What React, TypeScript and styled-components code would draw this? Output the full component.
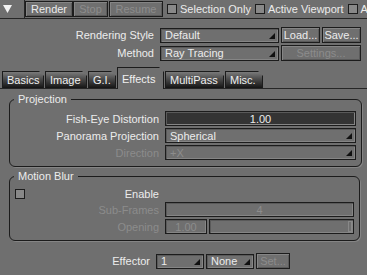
import React from "react";
import styled, { createGlobalStyle, css } from "styled-components";

const GlobalStyle = createGlobalStyle`
  html, body {
    margin: 0;
    padding: 0;
    background: #6f6f6f;
  }
  body {
    font-family: "Liberation Sans", Arial, sans-serif;
    font-size: 11px;
    color: #ececec;
  }
`;

const Panel = styled.div`
  width: 367px;
  height: 275px;
  overflow: hidden;
  background: #6f6f6f;
`;

const TopBar = styled.div`
  display: flex;
  align-items: center;
  height: 18px;
  border-bottom: 1px solid #262626;
  white-space: nowrap;
  overflow: hidden;
`;

const Toggle = styled.div`
  width: 25px;
  height: 18px;
  flex-shrink: 0;
  border-right: 1px solid #262626;
  display: flex;
  align-items: center;
  padding-left: 3px;
  box-sizing: border-box;
`;

const Btn = styled.div<{ $disabled?: boolean; $w: number }>`
  box-sizing: border-box;
  width: ${(p) => p.$w}px;
  height: 16px;
  border: 1px solid #1c1c1c;
  box-shadow: inset 1px 1px 0 #858585, inset -1px -1px 0 #5a5a5a;
  display: flex;
  align-items: center;
  justify-content: center;
  color: ${(p) => (p.$disabled ? "#8c8c8c" : "#ececec")};
  flex-shrink: 0;
`;

const Check = styled.span<{ $size?: number }>`
  display: inline-block;
  box-sizing: border-box;
  width: ${(p) => p.$size ?? 9}px;
  height: ${(p) => p.$size ?? 9}px;
  border: 1px solid #1c1c1c;
  background: #888;
  flex-shrink: 0;
`;

const CheckItem = styled.label`
  display: flex;
  align-items: center;
  gap: 3px;
  margin-left: 4px;
  flex-shrink: 0;
`;

const Section = styled.div<{ $label: number }>`
  display: grid;
  grid-template-columns: ${(p) => p.$label}px 1fr;
  column-gap: 6px;
  row-gap: 2px;
  align-items: center;
`;

const Label = styled.div<{ $disabled?: boolean }>`
  text-align: right;
  white-space: nowrap;
  color: ${(p) => (p.$disabled ? "#8c8c8c" : "#ececec")};
`;

const EnableLabel = styled(Label)`
  display: flex;
  justify-content: space-between;
  align-items: center;
  padding-left: 5px;
`;

const Controls = styled.div`
  display: flex;
  gap: 2px;
  align-items: center;
`;

const fieldBase = css`
  box-sizing: border-box;
  height: 15px;
  border: 1px solid #1c1c1c;
  box-shadow: inset 1px 1px 0 #5a5a5a, inset -1px -1px 0 #858585;
  display: flex;
  align-items: center;
  padding: 0 4px;
  position: relative;
  white-space: nowrap;
  flex-shrink: 0;
`;

const Select = styled.div<{ $w: number; $disabled?: boolean }>`
  ${fieldBase}
  width: ${(p) => p.$w}px;
  color: ${(p) => (p.$disabled ? "#8c8c8c" : "#ececec")};
  &::after {
    content: "";
    position: absolute;
    right: 3px;
    bottom: 3px;
    width: 0;
    height: 0;
    border-left: 6px solid transparent;
    border-bottom: 6px solid #111;
  }
`;

const Field = styled.div<{ $w?: number; $dark?: boolean; $disabled?: boolean }>`
  ${fieldBase}
  width: ${(p) => (p.$w ? `${p.$w}px` : "auto")};
  flex: ${(p) => (p.$w ? "0 0 auto" : "1")};
  justify-content: center;
  background: ${(p) => (p.$dark ? "#343434" : "transparent")};
  color: ${(p) => (p.$disabled ? "#8c8c8c" : "#ececec")};
`;

const Slider = styled.div`
  ${fieldBase}
  flex: 1;
  justify-content: flex-end;
  padding: 0 1px;
`;

const Knob = styled.div`
  width: 4px;
  height: 11px;
  box-sizing: border-box;
  border: 1px solid #888;
`;

const Tabs = styled.div`
  display: flex;
  align-items: flex-end;
  height: 22px;
  margin-top: 5px;
  padding-left: 2px;
  border-bottom: 1px solid #262626;
`;

const Tab = styled.div<{ $active?: boolean; $w: number }>`
  box-sizing: border-box;
  width: ${(p) => p.$w}px;
  height: ${(p) => (p.$active ? 22 : 17)}px;
  margin-right: 1px;
  margin-bottom: ${(p) => (p.$active ? -1 : 0)}px;
  padding: 0 0 0 4px;
  display: flex;
  align-items: center;
  color: #f0f0f0;
  border: 1px solid #1c1c1c;
  border-bottom: none;
  clip-path: polygon(0 0, calc(100% - 5px) 0, 100% 5px, 100% 100%, 0 100%);
  background: ${(p) =>
    p.$active ? "#6f6f6f" : "linear-gradient(#7a7a7a, #4a4a4a 45%, #141414)"};
`;

const Group = styled.fieldset<{ $gap: number }>`
  margin: ${(p) => p.$gap}px 7px 0 9px;
  padding: 6px 5px 6px 0;
  border: 1px solid #1c1c1c;
  box-shadow: 1px 1px 0 #858585;
  border-radius: 6px;
  & > legend {
    padding: 0 4px;
    margin-left: 4px;
    color: #ececec;
  }
`;

const Footer = styled.div`
  display: grid;
  grid-template-columns: 150px 1fr;
  column-gap: 6px;
  align-items: center;
  margin-top: 12px;
`;

export default function App() {
  return (
    <>
      <GlobalStyle />
      <Panel>
        <TopBar>
          <Toggle>
            <svg width="9" height="8" viewBox="0 0 9 8">
              <path d="M0 0 H9 L4.5 8 Z" fill="#f2f2f2" />
            </svg>
          </Toggle>
          <Btn $w={48}>Render</Btn>
          <Btn $w={35} $disabled>Stop</Btn>
          <Btn $w={54} $disabled style={{ marginLeft: 1 }}>Resume</Btn>
          <CheckItem>
            <Check $size={10} /> Selection Only
          </CheckItem>
          <CheckItem>
            <Check $size={10} /> Active Viewport
          </CheckItem>
          <CheckItem>
            <Check $size={10} /> Auto
          </CheckItem>
        </TopBar>

        <Section $label={154} style={{ marginTop: 8 }}>
          <Label>Rendering Style</Label>
          <Controls>
            <Select $w={119}>Default</Select>
            <Btn $w={39}>Load...</Btn>
            <Btn $w={39}>Save...</Btn>
          </Controls>
          <Label>Method</Label>
          <Controls>
            <Select $w={119}>Ray Tracing</Select>
            <Btn $w={80} $disabled>Settings...</Btn>
          </Controls>
        </Section>

        <Tabs>
          <Tab $w={42}>Basics</Tab>
          <Tab $w={42}>Image</Tab>
          <Tab $w={28}>G.I.</Tab>
          <Tab $w={47} $active>Effects</Tab>
          <Tab $w={59}>MultiPass</Tab>
          <Tab $w={38}>Misc.</Tab>
        </Tabs>

        <Group $gap={4}>
          <legend>Projection</legend>
          <Section $label={149}>
            <Label>Fish-Eye Distortion</Label>
            <Field $dark>1.00</Field>
            <Label>Panorama Projection</Label>
            <Select $w={191}>Spherical</Select>
            <Label $disabled>Direction</Label>
            <Select $w={191} $disabled>+X</Select>
          </Section>
        </Group>

        <Group $gap={3}>
          <legend>Motion Blur</legend>
          <Section $label={149}>
            <EnableLabel>
              <Check $size={10} />
              <span>Enable</span>
            </EnableLabel>
            <div />
            <Label $disabled>Sub-Frames</Label>
            <Field $disabled>4</Field>
            <Label $disabled>Opening</Label>
            <Controls>
              <Field $w={42} $disabled>1.00</Field>
              <Slider>
                <Knob />
              </Slider>
            </Controls>
          </Section>
        </Group>

        <Footer>
          <Label>Effector</Label>
          <Controls>
            <Select $w={48}>1</Select>
            <Select $w={48}>None</Select>
            <Btn $w={34} $disabled>Set...</Btn>
          </Controls>
        </Footer>
      </Panel>
    </>
  );
}
